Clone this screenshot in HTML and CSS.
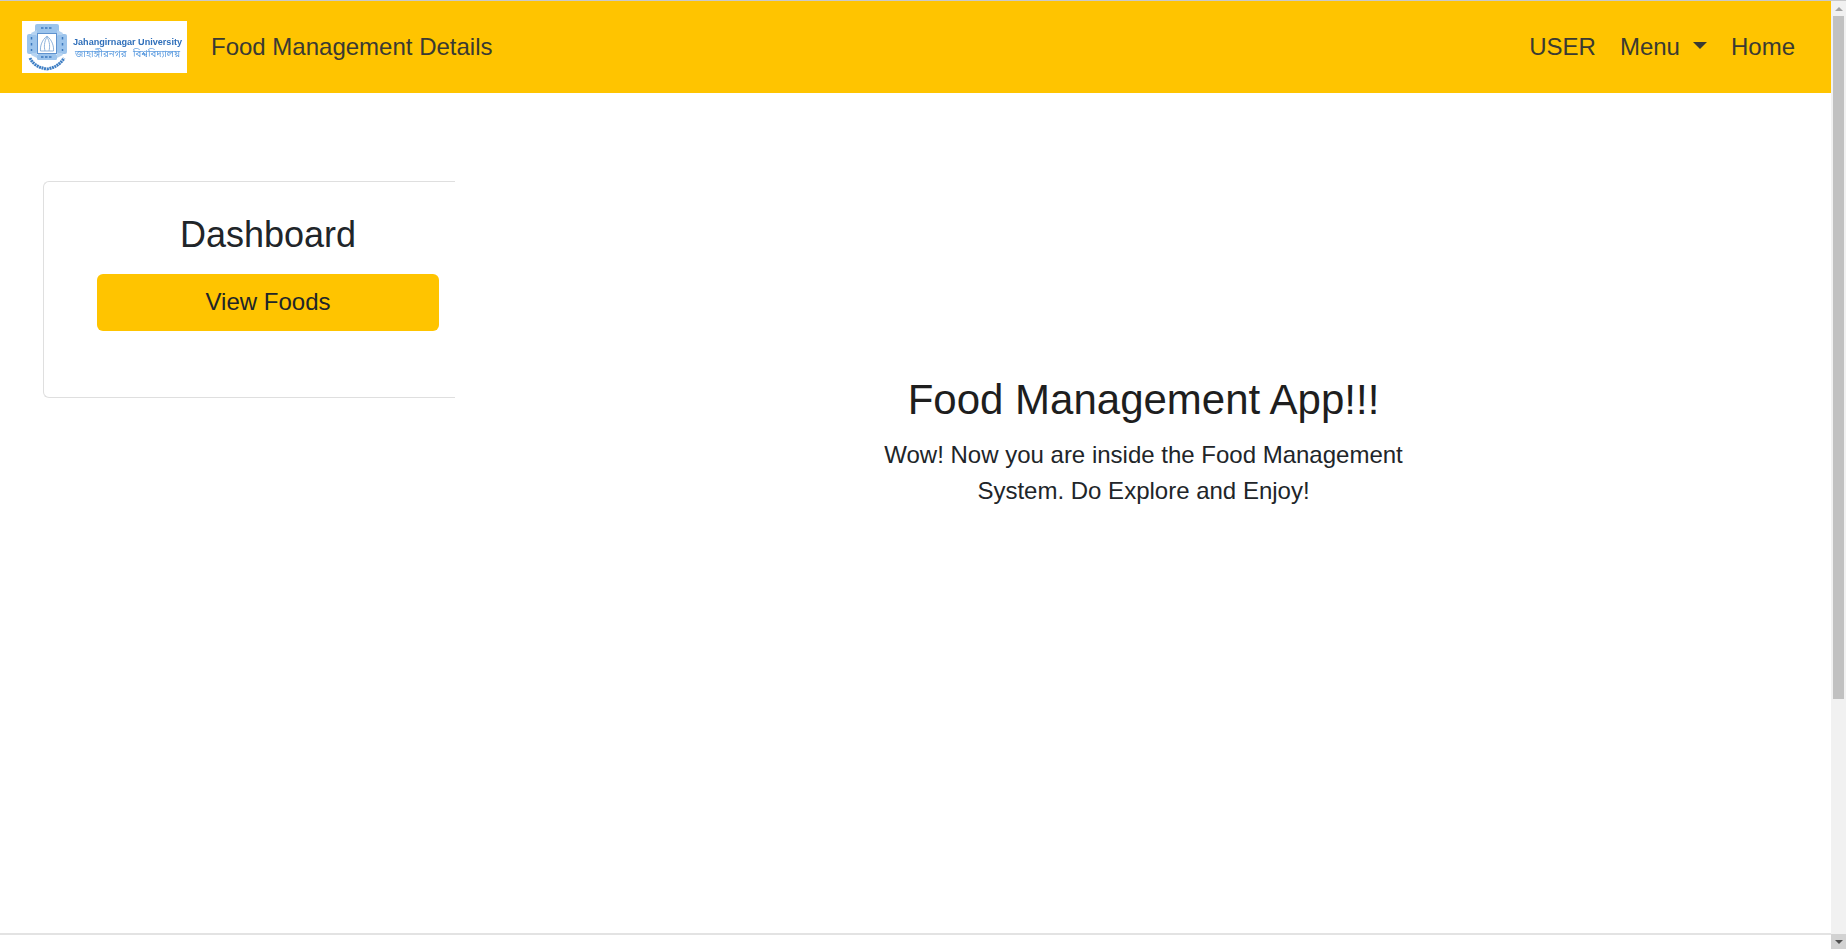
FILE: index.html
```html
<!DOCTYPE html>
<html lang="en">
<head>
<meta charset="utf-8">
<title>Food Management Details</title>
<link rel="stylesheet" href="styles.css">
</head>
<body>
<div class="page">
  <div class="content">
    <header class="navbar">
      <a class="brand" href="#">
        <svg class="logo" viewBox="0 0 165 52" aria-label="Jahangirnagar University logo">
          <rect width="165" height="52" fill="#fff"/>
          <g class="seal">
            <rect x="13" y="3" width="24" height="9" rx="2" fill="#9cc4ec"/>
            <rect x="5" y="13" width="10" height="20" rx="2" fill="#9cc4ec"/>
            <rect x="35" y="13" width="10" height="20" rx="2" fill="#9cc4ec"/>
            <rect x="15" y="33" width="20" height="6" rx="1.500" fill="#9cc4ec"/>
            <path d="M9 12 L15 9 L15 14 L10 14Z M41 12 L35 9 L35 14 L40 14Z M9 34 L15 37 L15 32 L10 32Z M41 34 L35 37 L35 32 L40 32Z" fill="#b5d3f1"/>
            <rect x="15.500" y="12.500" width="19" height="20" fill="#fff" stroke="#5f93cf" stroke-width="1"/>
            <path d="M25 15 C20 19 18 25 18.500 30 L31.500 30 C32 25 30 19 25 15Z M25 16 C22 21 22 26 23 30 M25 16 C28 21 28 26 27 30" fill="none" stroke="#8fb4dc" stroke-width="1"/>
            <path d="M9.500 16v3M9.500 22v3M9.500 28v2M40.500 16v3M40.500 22v3M40.500 28v2M19 7h12M19 36h12" stroke="#3c78bd" stroke-width="1.500" stroke-dasharray="2.500 1.500"/>
            <path d="M8 37 Q12 46 25 48 Q37 46 42 37" fill="none" stroke="#3f7fc4" stroke-width="3" stroke-dasharray="2 0.600"/>
          </g>
          <text class="logo-en" x="51" y="24" textLength="109" lengthAdjust="spacingAndGlyphs">Jahangirnagar University</text>
          <text class="logo-bn" x="53" y="36" textLength="105" lengthAdjust="spacingAndGlyphs">জাহাঙ্গীরনগর বিশ্ববিদ্যালয়</text>
        </svg>
        <span class="brand-text">Food Management Details</span>
      </a>
      <nav class="nav">
        <a class="nav-link" href="#">USER</a>
        <a class="nav-link" href="#">Menu<span class="caret"></span></a>
        <a class="nav-link" href="#">Home</a>
      </nav>
    </header>
    <main class="main">
      <aside class="sidebar">
        <div class="card">
          <h2 class="card-title">Dashboard</h2>
          <a class="btn" href="#">View Foods</a>
        </div>
      </aside>
      <section class="hero">
        <h1 class="hero-title">Food Management App!!!</h1>
        <p class="hero-text">Wow! Now you are inside the Food Management System. Do Explore and Enjoy!</p>
      </section>
    </main>
    <div class="bottom-bar"></div>
  </div>
  <div class="scrollbar" aria-hidden="true">
    <div class="sb-up"><span class="sb-arrow-up"></span></div>
    <div class="sb-track"><div class="sb-thumb"></div></div>
    <div class="sb-down"><span class="sb-arrow-down"></span></div>
  </div>
</div>
</body>
</html>
```
FILE: styles.css
```css
* { box-sizing: border-box; }
html, body { margin: 0; height: 100%; overflow: hidden; }
body {
  font-family: "Liberation Sans", Arial, sans-serif;
  font-size: 24px;
  line-height: 1.5;
  color: #212529;
  background: #fff;
  border-top: 1px solid #c9c9c9;
}
a { text-decoration: none; color: inherit; }
.page { display: flex; height: 948px; }
.content { flex: 1; min-width: 0; display: flex; flex-direction: column; }

.navbar {
  height: 92px;
  flex: none;
  background: #ffc400;
  display: flex;
  align-items: center;
  justify-content: space-between;
  padding: 0 24px 0 22px;
}
.brand { display: flex; align-items: center; gap: 24px; color: #3a3a32; }
.logo { width: 165px; height: 52px; display: block; }
.seal { filter: blur(0.6px); }
.logo-en { font: bold 9.500px "Liberation Sans", Arial, sans-serif; fill: #2f6fba; filter: blur(0.35px); }
.logo-bn { font: 10px "Noto Sans Bengali", "Noto Sans", "DejaVu Sans", sans-serif; word-spacing: 4px; fill: #5c9ce0; filter: blur(0.45px); }
.nav { display: flex; }
.nav-link { padding: 0 12px; color: #3a3a32; display: flex; align-items: center; }
.caret {
  margin-left: 13px;
  margin-top: -4px;
  border-top: 7px solid currentColor;
  border-left: 7px solid transparent;
  border-right: 7px solid transparent;
}

.main { flex: 1; display: flex; min-height: 0; }
.sidebar { width: 455px; flex: none; padding: 88px 0 0 43px; }
.card {
  height: 217px;
  border: 1px solid #dfdfdf;
  border-right: 0;
  border-radius: 6px 0 0 6px;
  padding: 31px 16px 0 53px;
  display: flex;
  flex-direction: column;
  align-items: stretch;
  text-align: center;
}
.card-title { margin: 0 0 18px; font-size: 36px; font-weight: 400; line-height: 1.2; }
.btn {
  width: 342px;
  height: 57px;
  background: #ffc400;
  border-radius: 6px;
  display: flex;
  align-items: center;
  justify-content: center;
  padding-bottom: 2px;
}
.hero { flex: 1; padding: 282px 0 0 1px; text-align: center; display: flex; flex-direction: column; align-items: center; }
.hero-title { margin: 0 0 12px; font-size: 42px; font-weight: 400; line-height: 1.2; color: #1e1e1e; }
.hero-text { margin: 0; width: 540px; }
.bottom-bar { height: 16px; flex: none; border-top: 2px solid #e3e3e3; }

.scrollbar { width: 15px; flex: none; display: flex; flex-direction: column; background: #f1f1f1; }
.sb-up { height: 15px; flex: none; display: flex; align-items: center; justify-content: center; }
.sb-arrow-up { border-bottom: 4px solid #a3a3a3; border-left: 4px solid transparent; border-right: 4px solid transparent; }
.sb-track { flex: 1; padding: 0 2px; }
.sb-thumb { height: 683px; background: #c1c1c1; }
.sb-down { height: 15px; flex: none; background: #d2d2d2; display: flex; align-items: center; justify-content: center; }
.sb-arrow-down { border-top: 4px solid #505050; border-left: 4px solid transparent; border-right: 4px solid transparent; }
```
